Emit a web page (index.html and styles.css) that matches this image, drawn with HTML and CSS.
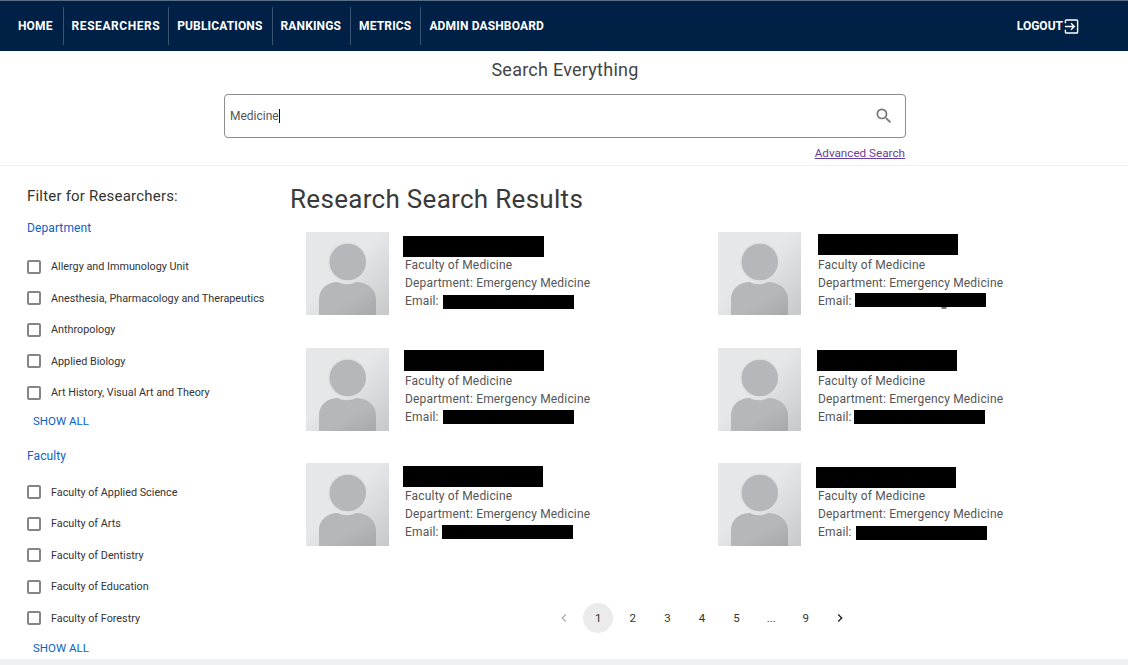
FILE: index.html
```html
<!DOCTYPE html>
<html lang="en">
<head>
    <meta charset="UTF-8">
    <meta name="viewport" content="width=device-width, initial-scale=1.0">
    <title>Research Search Results</title>
    <link rel="stylesheet" href="styles.css">
</head>
<body>
    <header class="navbar">
        <nav class="nav-links">
            <a href="#">Home</a>
            <a href="#">Researchers</a>
            <a href="#">Publications</a>
            <a href="#">Rankings</a>
            <a href="#">Metrics</a>
            <a href="#">Admin Dashboard</a>
        </nav>
        <a class="logout" href="#">Logout
            <svg viewBox="0 0 16 16" width="15" height="15" fill="none" stroke="#fff" stroke-width="1.5">
                <path d="M1.5 4.5V2a1 1 0 0 1 1-1h11a1 1 0 0 1 1 1v12a1 1 0 0 1-1 1h-11a1 1 0 0 1-1-1v-2.500"/>
                <path d="M1 8h10M7.500 4.500 11 8l-3.500 3.500"/>
            </svg>
        </a>
    </header>

    <section class="search-area">
        <h2>Search Everything</h2>
        <div class="search-box">
            <span class="search-value">Medicine</span>
            <svg viewBox="0 0 24 24" width="20" height="20" fill="#757575">
                <path d="M15.500 14h-.79l-.28-.27A6.470 6.470 0 0 0 16 9.500 6.500 6.500 0 1 0 9.500 16c1.610 0 3.090-.59 4.230-1.570l.27.28v.79l5 4.990L20.490 19l-4.990-5zm-6 0C7.010 14 5 11.990 5 9.500S7.010 5 9.500 5 14 7.010 14 9.500 11.990 14 9.500 14z"/>
            </svg>
        </div>
        <div class="advanced-row"><a href="#">Advanced Search</a></div>
    </section>

    <main class="content">
        <aside class="filters">
            <h3>Filter for Researchers:</h3>

            <h4>Department</h4>
            <ul class="filter-list">
                <li><span class="checkbox"></span>Allergy and Immunology Unit</li>
                <li><span class="checkbox"></span>Anesthesia, Pharmacology and Therapeutics</li>
                <li><span class="checkbox"></span>Anthropology</li>
                <li><span class="checkbox"></span>Applied Biology</li>
                <li><span class="checkbox"></span>Art History, Visual Art and Theory</li>
            </ul>
            <a class="show-all" href="#">Show all</a>

            <h4>Faculty</h4>
            <ul class="filter-list">
                <li><span class="checkbox"></span>Faculty of Applied Science</li>
                <li><span class="checkbox"></span>Faculty of Arts</li>
                <li><span class="checkbox"></span>Faculty of Dentistry</li>
                <li><span class="checkbox"></span>Faculty of Education</li>
                <li><span class="checkbox"></span>Faculty of Forestry</li>
            </ul>
            <a class="show-all show-all-last" href="#">Show all</a>
        </aside>

        <section class="results">
            <h1>Research Search Results</h1>

            <svg class="svg-defs" width="0" height="0">
                <defs>
                    <linearGradient id="avatarBg" x1="0" y1="0" x2="1" y2="1">
                        <stop offset="0.45" stop-color="#e6e7e9"/>
                        <stop offset="1" stop-color="#c6c8ca"/>
                    </linearGradient>
                    <linearGradient id="avatarFg" x1="0" y1="0" x2="1" y2="1">
                        <stop offset="0.55" stop-color="#b6b7bb"/>
                        <stop offset="1" stop-color="#a6a8aa"/>
                    </linearGradient>
                    <symbol id="avatar" viewBox="0 0 83 83">
                        <rect width="83" height="83" fill="url(#avatarBg)"/>
                        <path d="M13 83V67c0-10 8-17 19-17 5 3 13 3 18 0 11 0 20 7 20 17v16z" fill="url(#avatarFg)"/>
                        <circle cx="41.800" cy="30" r="19" fill="#b6b7bb" stroke="#e0e1e3" stroke-width="1.500"/>
                    </symbol>
                </defs>
            </svg>

            <div class="results-grid">
                <article class="card card-1">
                    <svg class="avatar"><use href="#avatar"/></svg>
                    <div class="card-info">
                        <div class="redacted name-bar"></div>
                        <p>Faculty of Medicine</p>
                        <p>Department: Emergency Medicine</p>
                        <p>Email: <span class="redacted email-bar"></span></p>
                    </div>
                </article>
                <article class="card card-2">
                    <svg class="avatar"><use href="#avatar"/></svg>
                    <div class="card-info">
                        <div class="redacted name-bar"></div>
                        <p>Faculty of Medicine</p>
                        <p>Department: Emergency Medicine</p>
                        <p>Email: <span class="redacted email-bar"></span></p>
                    </div>
                </article>
                <article class="card card-3">
                    <svg class="avatar"><use href="#avatar"/></svg>
                    <div class="card-info">
                        <div class="redacted name-bar"></div>
                        <p>Faculty of Medicine</p>
                        <p>Department: Emergency Medicine</p>
                        <p>Email: <span class="redacted email-bar"></span></p>
                    </div>
                </article>
                <article class="card card-4">
                    <svg class="avatar"><use href="#avatar"/></svg>
                    <div class="card-info">
                        <div class="redacted name-bar"></div>
                        <p>Faculty of Medicine</p>
                        <p>Department: Emergency Medicine</p>
                        <p>Email: <span class="redacted email-bar"></span></p>
                    </div>
                </article>
                <article class="card card-5">
                    <svg class="avatar"><use href="#avatar"/></svg>
                    <div class="card-info">
                        <div class="redacted name-bar"></div>
                        <p>Faculty of Medicine</p>
                        <p>Department: Emergency Medicine</p>
                        <p>Email: <span class="redacted email-bar"></span></p>
                    </div>
                </article>
                <article class="card card-6">
                    <svg class="avatar"><use href="#avatar"/></svg>
                    <div class="card-info">
                        <div class="redacted name-bar"></div>
                        <p>Faculty of Medicine</p>
                        <p>Department: Emergency Medicine</p>
                        <p>Email: <span class="redacted email-bar"></span></p>
                    </div>
                </article>
            </div>

            <nav class="pagination">
                <span class="page-arrow">
                    <svg viewBox="0 0 24 24" width="16" height="16" fill="#b0b0b0"><path d="M15.410 7.410 14 6l-6 6 6 6 1.410-1.410L10.830 12z"/></svg>
                </span>
                <span class="page current">1</span>
                <span class="page">2</span>
                <span class="page">3</span>
                <span class="page">4</span>
                <span class="page">5</span>
                <span class="page">...</span>
                <span class="page">9</span>
                <span class="page-arrow">
                    <svg viewBox="0 0 24 24" width="16" height="16" fill="#222"><path d="M10 6 8.590 7.410 13.170 12l-4.580 4.590L10 18l6-6z"/></svg>
                </span>
            </nav>
        </section>
    </main>

    <footer class="footer-strip"></footer>
</body>
</html>
```

FILE: styles.css
```css
html, body {
    height: 665px;
    overflow: hidden;
}

body {
    margin: 0;
    font-family: 'Roboto', sans-serif;
    color: #333;
    background: #fff;
    display: flex;
    flex-direction: column;
}

/* Top navigation */
.navbar {
    height: 50px;
    flex-shrink: 0;
    background: #002145;
    border-top: 1px solid #5a6f86;
    display: flex;
    align-items: center;
    justify-content: space-between;
    padding: 0 49px 0 10px;
}

.nav-links {
    display: flex;
    align-items: center;
}

.nav-links a {
    color: #fff;
    font-size: 12px;
    font-weight: 700;
    letter-spacing: 0.15px;
    text-transform: uppercase;
    text-decoration: none;
    padding: 0 9px 0 8px;
    height: 38px;
    line-height: 38px;
    border-left: 1px solid #3a5573;
}

.nav-links a:first-child {
    border-left: 0;
    padding-right: 10px;
}

.nav-links a:nth-child(2) {
    letter-spacing: 0.55px;
    padding-right: 8px;
}

.logout {
    color: #fff;
    font-size: 12px;
    font-weight: 700;
    text-transform: uppercase;
    text-decoration: none;
    display: flex;
    align-items: center;
    gap: 1px;
}

/* Search */
.search-area {
    height: 115px;
    flex-shrink: 0;
    box-sizing: border-box;
    padding-left: 2px;
    border-bottom: 1px solid #eceef0;
    display: flex;
    flex-direction: column;
    align-items: center;
}

.search-area h2 {
    margin: 8px 0 13px;
    font-size: 18px;
    line-height: 22px;
    font-weight: 400;
    letter-spacing: 0.25px;
    color: #444;
}

.search-box {
    width: 664px;
    height: 42px;
    border: 1px solid #8c8c8c;
    border-radius: 4px;
    display: flex;
    align-items: center;
    justify-content: space-between;
    padding: 0 11px 0 5px;
}

.search-value {
    font-size: 12px;
    color: #555;
    border-right: 1px solid #111;
    line-height: 14px;
}

.advanced-row {
    width: 681px;
    padding-right: 1px;
    text-align: right;
    margin-top: 4px;
}

.advanced-row a {
    font-size: 11.700px;
    color: #6a3d9a;
}

/* Main area */
.content {
    flex: 1;
    display: flex;
    min-height: 0;
}

.filters {
    width: 290px;
    flex-shrink: 0;
    box-sizing: border-box;
    padding: 20px 0 0 27px;
}

.filters h3 {
    margin: 0 0 14px;
    font-size: 15px;
    line-height: 20px;
    font-weight: 400;
    letter-spacing: 0.2px;
    color: #333;
}

.filters h4 {
    margin: 0 0 15px;
    font-size: 12px;
    line-height: 16px;
    font-weight: 400;
    letter-spacing: 0.1px;
    color: #0b62c4;
}

.filters .show-all + h4 {
    margin-bottom: 13px;
}

.filter-list {
    list-style: none;
    margin: 0;
    padding: 0;
}

.filter-list li {
    height: 31.500px;
    display: flex;
    align-items: center;
    font-size: 10.800px;
    color: #333;
}

.checkbox {
    width: 10px;
    height: 10px;
    border: 2px solid #858585;
    border-radius: 2px;
    margin-right: 10px;
    flex-shrink: 0;
}

.show-all {
    display: block;
    margin: 5px 0 20px 6px;
    font-size: 11.500px;
    line-height: 14px;
    color: #0b62c4;
    text-transform: uppercase;
    text-decoration: none;
}

.show-all-last {
    margin-top: 7px;
}

.results {
    flex: 1;
    min-width: 0;
}

.results h1 {
    margin: 17px 0 17px;
    font-size: 26px;
    line-height: 32px;
    font-weight: 400;
    letter-spacing: 0.3px;
    color: #3a3a3a;
}

.svg-defs {
    position: absolute;
}

.results-grid {
    display: grid;
    grid-template-columns: 412px 412px;
    grid-auto-rows: 115.500px;
    padding-left: 16px;
}

.card {
    display: flex;
    gap: 16px;
}

.avatar {
    width: 83px;
    height: 83px;
    flex-shrink: 0;
}

.card-info {
    padding-top: 4px;
}

.card:nth-child(even) .card-info {
    margin-left: 1px;
}

.card-info p {
    margin: 0;
    height: 18px;
    font-size: 12px;
    line-height: 18px;
    letter-spacing: 0.17px;
    color: #555;
}

/* Black boxes that hide names and addresses; they were drawn by hand, so each is a bit off */
.redacted {
    background: #000;
}

.name-bar {
    width: 140px;
    height: 21px;
    margin: 0 0 -1px -2px;
}

.email-bar {
    display: inline-block;
    position: relative;
    width: 131px;
    height: 14px;
    vertical-align: -4px;
    margin-left: 1px;
}

.card-1 .name-bar { width: 141px; }
.card-2 .name-bar { margin: -2px 0 1px 0; }
.card-3 .name-bar { margin: -2px 0 1px -1px; }
.card-4 .name-bar { margin: -2px 0 1px -1px; }
.card-5 .name-bar { margin: -1px 0 0 -2px; }

.card-2 .email-bar { margin-left: 0; vertical-align: -2px; }
.card-3 .email-bar { vertical-align: -3px; }
.card-4 .email-bar { margin-left: -1px; vertical-align: -3px; }
.card-5 .email-bar { margin-left: 0; vertical-align: -3px; }
.card-6 .email-bar { margin-left: 1px; }

/* the tail of a letter still shows under this box */
.card-2 .email-bar::after {
    content: "";
    position: absolute;
    left: 86px;
    bottom: -2px;
    width: 6px;
    height: 2px;
    background: #777;
    border-radius: 0 0 3px 3px;
}

/* Pagination */
.pagination {
    display: flex;
    align-items: center;
    justify-content: center;
    margin-top: 24px;
    width: 824px;
}

.page, .page-arrow {
    width: 30px;
    height: 30px;
    margin: 0 2.300px;
    display: flex;
    align-items: center;
    justify-content: center;
    font-size: 11.500px;
    color: #333;
    border-radius: 50%;
}

.page.current {
    background: #ebebeb;
}

.footer-strip {
    height: 6px;
    flex-shrink: 0;
    background: #f0f1f3;
}
```
